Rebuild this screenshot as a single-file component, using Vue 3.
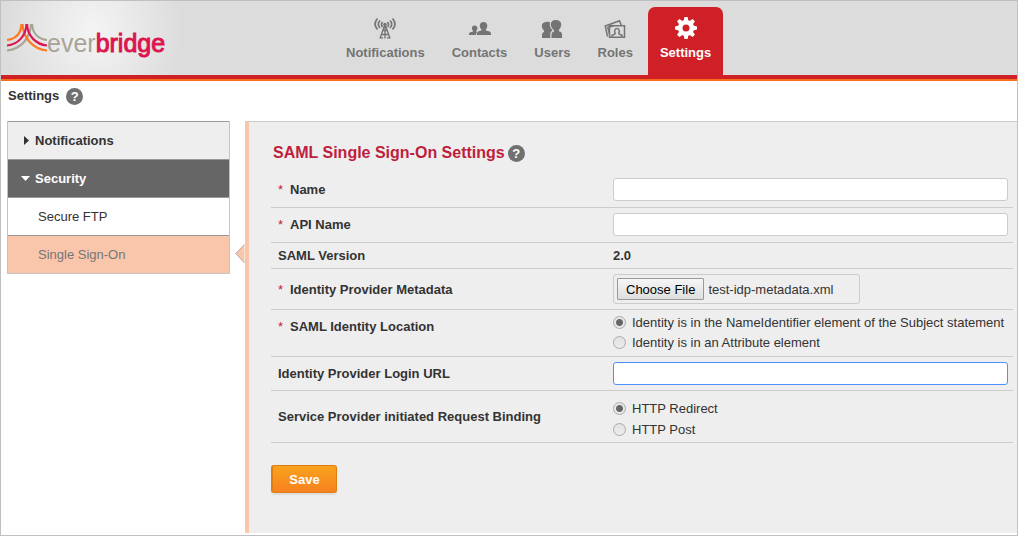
<script setup>
import { onMounted, ref } from 'vue'

const name = ref('')
const apiName = ref('')
const loginUrl = ref('')
const identityLocation = ref('name')
const binding = ref('redirect')
const metadataInput = ref(null)

onMounted(() => {
  const transfer = new DataTransfer()
  transfer.items.add(new File(['<EntityDescriptor/>'], 'test-idp-metadata.xml', { type: 'text/xml' }))
  metadataInput.value.files = transfer.files
})
</script>

<template>
  <div class="page">
    <header class="header">
      <a class="logo" href="#" aria-label="everbridge">
        <svg class="mark" viewBox="0 0 40 28" width="40" height="28" fill="none" stroke-width="2.200">
          <g stroke="#a8a497">
            <path d="M24 0C23.500 14 14 25 0 26.500" />
            <path d="M25 0C25.500 9 31 15 40 16" />
          </g>
          <g stroke="#ff7a1f">
            <path d="M14.500 0C14 9 9 15 0 16" />
            <path d="M15.500 0C16 14 26 25 40 26.500" />
          </g>
          <g stroke="#dc1550">
            <path d="M19.500 0C19 12 11 20.500 0 21.500" />
            <path d="M20 0C20.500 12 29 20.500 40 21.500" />
          </g>
        </svg>
        <span class="word">ever<span class="strong">bridge</span></span>
      </a>
      <nav class="nav">
        <a class="tab" href="#">
          <svg viewBox="0 0 22 22" width="22" height="22" fill="none" stroke="currentColor" stroke-width="1.700">
            <path d="M3.500 1.500Q-1.500 7 3.500 12.500M6 3.500Q2.500 7 6 11M8.500 5Q6.500 7.500 8.500 10M18.500 1.500Q23.500 7 18.500 12.500M16 3.500Q19.500 7 16 11M13.500 5Q15.500 7.500 13.500 10" />
            <path d="M10.300 9L6 21.500M11.700 9L16 21.500M11 9V21.500M9 13.500H13M7.500 17.500H14.500M5.500 20.800H9M13 20.800H16.500" stroke-width="1.300" />
            <circle cx="11" cy="7.500" r="1.800" fill="currentColor" stroke="none" />
          </svg>
          <span>Notifications</span>
        </a>
        <a class="tab" href="#">
          <svg viewBox="0 0 22 22" width="22" height="22" fill="currentColor">
            <path d="M14.500 5c2.400 0 3.800 1.500 3.800 3.800 0 1.500-.6 2.800-1.400 3.500v1.300c2.800.6 5.100 1.200 5.100 2.800V18H8v-1.600c0-1.600 1.900-2.200 4.300-2.800v-1.300c-.9-.7-1.500-2-1.500-3.500C10.800 6.500 12.100 5 14.500 5z" />
            <path d="M5.600 8.500c1.700 0 2.800 1 2.800 2.700 0 1-.4 2-1.100 2.500v1l1 .4C7.500 15.800 7 16.600 7 18H0v-1.200c0-1.200 2-1.700 4-2.200v-.9c-.6-.5-1.100-1.500-1.100-2.500 0-1.700 1-2.700 2.700-2.700z" />
          </svg>
          <span>Contacts</span>
        </a>
        <a class="tab" href="#">
          <svg viewBox="0 0 22 22" width="22" height="22" fill="currentColor">
            <path d="M14.500 3c3.600 0 5.700 1.500 5.700 4.500 0 2.300-1 4.100-2.300 5.300v1.500c1.800.6 3.100 1.200 3.100 2.800V21H10.500v-3.600c0-1.800 1-2.500 2.500-3v-1.500c-2-.9-3.200-3.400-3.200-5.400C9.800 4.500 11.500 3 14.500 3z" />
            <path d="M4.800 5C7 4.600 8.600 5 9 5.700c-.7 3 .4 5.600 2.300 7.200v.8c-1.400.5-2 1.500-2 3V21H1v-3.300c0-1.600.8-2.300 2-2.800v-1.300C1.600 12.400.8 10.800.8 8.800.8 6.500 2.300 5.300 4.800 5z" />
          </svg>
          <span>Users</span>
        </a>
        <a class="tab" href="#">
          <svg viewBox="0 0 22 22" width="22" height="22" fill="none" stroke="currentColor" stroke-width="1.500">
            <path d="M7 8.800H20.500V20.300H5.500V8.800H7" />
            <path d="M3.500 19.500L1.300 9L15.500 3.800L17.300 8.500M5.500 17L3.800 10.500L10 8.500" />
            <path d="M8 20V18.300C9.500 17.500 11.300 17.300 11.300 16.200C10.300 15.200 10.200 11.500 13 11.500C15.800 11.500 15.700 15.200 14.700 16.200C14.700 17.300 16.500 17.500 18 18.300V20" />
          </svg>
          <span>Roles</span>
        </a>
        <a class="tab active" href="#" aria-current="page">
          <svg viewBox="0 0 22 22" width="22" height="22">
            <circle cx="11" cy="11" r="5.800" fill="none" stroke="currentColor" stroke-width="4.600" />
            <g fill="currentColor">
              <path v-for="n in 8" :key="n" d="M8.600 4L9.400 0H12.600L13.400 4z" :transform="`rotate(${n * 45} 11 11)`" />
            </g>
          </svg>
          <span>Settings</span>
        </a>
      </nav>
    </header>

    <div class="crumb">
      <h1>Settings</h1>
      <button class="help" type="button" aria-label="Help">?</button>
    </div>

    <div class="body">
      <nav class="side" aria-label="Settings sections">
        <a class="group" href="#"><i class="caret right"></i>Notifications</a>
        <a class="group open" href="#"><i class="caret down"></i>Security</a>
        <a class="leaf" href="#">Secure FTP</a>
        <a class="leaf current" href="#">Single Sign-On
          <svg class="pointer" viewBox="0 0 10 20" width="10" height="20">
            <path d="M9.500 .5L.7 9.500L9.500 19" fill="#f9c5ab" stroke="#b5aeb0" />
          </svg>
        </a>
      </nav>

      <main class="panel">
        <div class="title">
          <h2>SAML Single Sign-On Settings</h2>
          <button class="help" type="button" aria-label="Help">?</button>
        </div>
        <form @submit.prevent>
          <div class="row">
            <label class="label" for="name"><span class="req">*</span>Name</label>
            <input id="name" v-model="name" class="text" type="text" />
          </div>
          <div class="row">
            <label class="label" for="api"><span class="req">*</span>API Name</label>
            <input id="api" v-model="apiName" class="text" type="text" />
          </div>
          <div class="row slim">
            <span class="label">SAML Version</span>
            <b>2.0</b>
          </div>
          <div class="row even">
            <label class="label" for="metadata"><span class="req">*</span>Identity Provider Metadata</label>
            <input id="metadata" ref="metadataInput" class="file" type="file" />
          </div>
          <div class="row top" role="radiogroup" aria-labelledby="location-label">
            <span id="location-label" class="label"><span class="req">*</span>SAML Identity Location</span>
            <div class="options">
              <label><input v-model="identityLocation" type="radio" name="location" value="name" />Identity is in the NameIdentifier element of the Subject statement</label>
              <label><input v-model="identityLocation" type="radio" name="location" value="attribute" />Identity is in an Attribute element</label>
            </div>
          </div>
          <div class="row even">
            <label class="label" for="url">Identity Provider Login URL</label>
            <input id="url" v-model="loginUrl" class="text focused" type="text" />
          </div>
          <div class="row even roomy" role="radiogroup" aria-labelledby="binding-label">
            <span id="binding-label" class="label">Service Provider initiated Request Binding</span>
            <div class="options">
              <label><input v-model="binding" type="radio" name="binding" value="redirect" />HTTP Redirect</label>
              <label><input v-model="binding" type="radio" name="binding" value="post" />HTTP Post</label>
            </div>
          </div>
          <button class="save" type="submit">Save</button>
        </form>
      </main>
    </div>
  </div>
</template>

<style>
body {
  background: #fff;
}
</style>

<style scoped>
* {
  box-sizing: border-box;
}
.page {
  display: flex;
  flex-direction: column;
  min-height: 100vh;
  border: 1px solid #c0c0c0;
  font: 13px/15px "Liberation Sans", Arial, sans-serif;
  color: #333;
}
a {
  color: inherit;
  text-decoration: none;
}
h1,
h2 {
  margin: 0;
}
.header {
  display: flex;
  align-items: flex-start;
  border-bottom: 2px solid #f96d1e;
  background: radial-gradient(ellipse 90px 110px at 92px 30px, #f4f4f4 0, #dcdcdc 100%);
  box-shadow: inset 0 -4px #cf2028;
}
.logo {
  display: flex;
  flex: 0 0 333px;
  padding: 23px 0 0 6px;
}
.word {
  padding-top: 5px;
  font-size: 25px;
  line-height: 28px;
  color: #a8a497;
}
.strong {
  color: #dc1550;
  -webkit-text-stroke: 1px #dc1550;
}
.nav {
  display: flex;
  gap: 3px;
  padding-top: 6px;
}
.tab {
  display: flex;
  flex-direction: column;
  align-items: center;
  gap: 6px;
  padding: 10px 12px 19px;
  border-radius: 7px 7px 0 0;
  font-weight: bold;
  color: #747474;
}
.active {
  background: #cf2028;
  color: #fff;
}
.crumb {
  display: flex;
  gap: 7px;
  height: 40px;
  padding: 7px 7px 0;
}
.crumb h1 {
  font-size: 13px;
}
.help {
  width: 17px;
  height: 17px;
  padding: 0;
  border: 0;
  border-radius: 50%;
  background: #707070;
  color: #fff;
  font: bold 13px/17px "Liberation Sans", Arial, sans-serif;
  text-align: center;
}
.body {
  display: flex;
  flex: 1;
  gap: 15px;
  padding: 0 0 2px 6px;
}
.side {
  flex: 0 0 223px;
  align-self: flex-start;
  border: 1px solid #c4c4c4;
  border-top: 0;
}
.side a {
  position: relative;
  display: flex;
  align-items: center;
  height: 38px;
  border-top: 1px solid #999;
}
.side .group {
  gap: 5px;
  padding-left: 13px;
  background: #eee;
  font-weight: bold;
}
.side .open {
  background: #666;
  color: #fff;
}
.side .leaf {
  padding-left: 30px;
  background: #fff;
}
.side .current {
  background: #f9c5ab;
  color: #777;
}
.caret {
  width: 9px;
  height: 9px;
  background: currentColor;
}
.right {
  clip-path: polygon(3px 0, 8px 50%, 3px 100%);
}
.down {
  clip-path: polygon(0 2px, 100% 2px, 50% 7px);
}
.pointer {
  position: absolute;
  right: -16px;
  top: 8px;
}
.panel {
  flex: 1;
  padding: 21px 4px 16px 22px;
  border-top: 1px solid #ccc;
  border-left: 4px solid #f9c5ab;
  background: #eee;
}
.title {
  display: flex;
  align-items: center;
  gap: 3px;
  height: 20px;
  margin-bottom: 10px;
  padding-left: 2px;
}
.title h2 {
  font-size: 16px;
  line-height: 20px;
  color: #be1e3c;
}
.row {
  display: grid;
  grid-template-columns: 335px 1fr;
  align-items: center;
  padding: 5px 0 6px 7px;
  border-bottom: 1px solid #ccc;
}
.slim {
  padding-block: 1px;
}
.even {
  padding-block: 5px;
}
.top {
  align-items: start;
}
.label {
  line-height: 23px;
  font-weight: bold;
}
.req {
  display: inline-block;
  width: 12px;
  font-weight: normal;
  color: #be1e3c;
}
.text {
  height: 23px;
  width: auto;
  margin-right: 5px;
  padding: 0 4px;
  border: 1px solid #ccc;
  border-radius: 3px;
  background: #fff;
  font: inherit;
  outline: none;
}
.text.focused {
  border-color: #4d90fe;
}
.file {
  width: 247px;
  height: 30px;
  padding: 3px;
  border: 1px solid #ccc;
  border-radius: 3px;
  font: inherit;
  color: #333;
}
.file::file-selector-button {
  height: 22px;
  margin: 0 4px 0 0;
  padding: 0 8px;
  border: 1px solid #999;
  border-radius: 1px;
  background: linear-gradient(#f6f6f6, #dedede);
  font: inherit;
  color: #000;
}
.options {
  display: grid;
  gap: 5px;
}
.roomy .options {
  gap: 6px;
  padding-top: 5px;
}
.options label {
  display: flex;
  align-items: center;
  gap: 6px;
  white-space: nowrap;
}
.options input {
  appearance: none;
  width: 13px;
  height: 13px;
  margin: 0;
  border: 1px solid #aaa;
  border-radius: 50%;
  background: linear-gradient(#e2e2e2, #ececec);
}
.options input:checked {
  background: radial-gradient(circle, #666 0, #666 3px, #e8e8e8 4px);
}
.save {
  width: 66px;
  height: 28px;
  margin-top: 22px;
  border: 1px solid #de7d10;
  border-left-width: 2px;
  border-radius: 3px;
  background: linear-gradient(#faa21e, #f6821f);
  box-shadow: 0 2px 1px #ddd;
  color: #fff;
  font: bold 13px/15px "Liberation Sans", Arial, sans-serif;
}
</style>
